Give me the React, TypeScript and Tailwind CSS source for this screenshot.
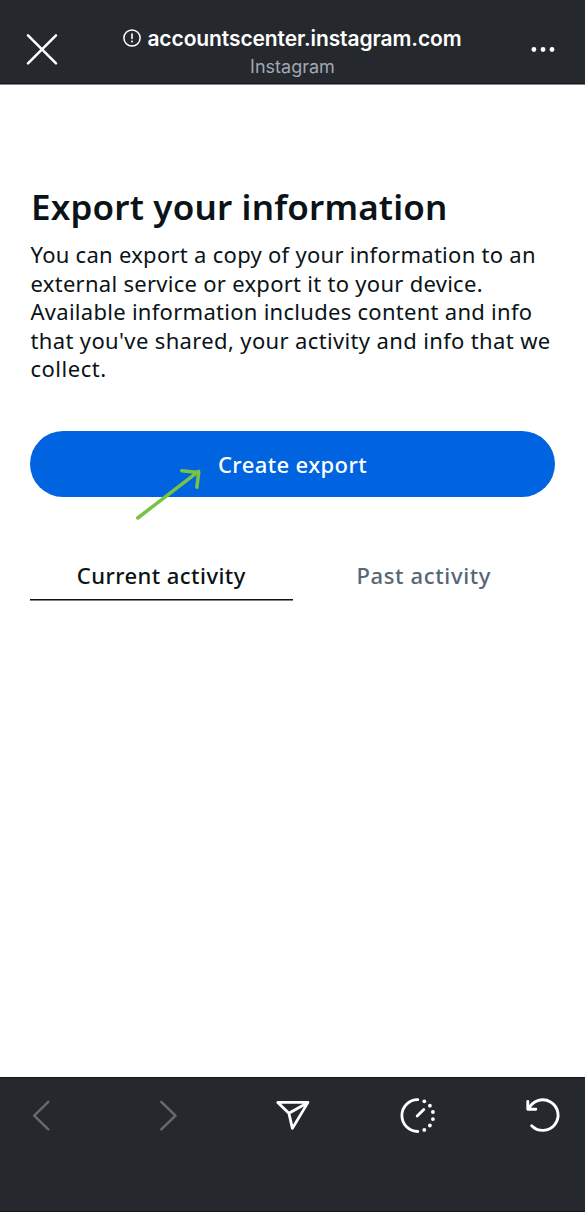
import React from "react";

const description = [
  { text: "You can export a copy of your information to an", tracking: "tracking-[0.28px]" },
  { text: "external service or export it to your device.", tracking: "tracking-[0.28px]" },
  { text: "Available information includes content and info", tracking: "tracking-[0.28px]" },
  { text: "that you've shared, your activity and info that we", tracking: "tracking-[0.36px]" },
  { text: "collect.", tracking: "tracking-[0.5px]" },
];

function Header() {
  return (
    <header className="flex h-[85px] shrink-0 items-start justify-between border-b border-[#86888b] bg-[#25282d] px-[26px] font-['Inter',sans-serif] text-white shadow-[inset_0_-1px_0_#15181d]">
      <button aria-label="Close" className="mt-[33px]">
        <svg width="32" height="32" viewBox="0 0 32 32" fill="none" stroke="currentColor" strokeWidth="2.5" strokeLinecap="round">
          <path d="M2 2.3 30 30.3M30 2.3 2 30.3" />
        </svg>
      </button>
      <div className="flex flex-col items-center pt-[24px]">
        <div className="flex h-[29px] items-center gap-[6px]">
          <svg className="mb-px" width="18" height="18" viewBox="0 0 18 18" fill="none" stroke="currentColor">
            <circle cx="9" cy="9" r="8.1" strokeWidth="1.5" />
            <path d="M9 5v4.5" strokeWidth="1.6" strokeLinecap="round" />
            <circle cx="9" cy="12.5" r="1" fill="currentColor" stroke="none" />
          </svg>
          <span className="pt-px text-[21px] leading-[28px] font-semibold tracking-[-0.1px] whitespace-nowrap">accountscenter.instagram.com</span>
        </div>
        <span className="text-[18px] leading-[28px] text-[#a0a9b5]">Instagram</span>
      </div>
      <button aria-label="More options" className="mt-[46px] flex w-[32px] justify-center">
        <svg width="24" height="7" viewBox="0 0 24 7" fill="currentColor">
          <circle cx="2.9" cy="3.5" r="2.4" />
          <circle cx="12" cy="3.5" r="2.4" />
          <circle cx="21" cy="3.5" r="2.4" />
        </svg>
      </button>
    </header>
  );
}

function Toolbar() {
  return (
    <nav className="flex h-[135px] shrink-0 items-start justify-between border-y border-[#15181d] bg-[#25282d] px-[22px] pt-[18px] text-white">
      <svg width="38" height="40" viewBox="0 0 38 40" fill="none" stroke="#66696d" strokeWidth="2.5" strokeLinecap="round" strokeLinejoin="round">
        <path d="M26.3 5.8 12.2 19.6l14.1 13.8" />
      </svg>
      <svg width="38" height="40" viewBox="0 0 38 40" fill="none" stroke="#66696d" strokeWidth="2.5" strokeLinecap="round" strokeLinejoin="round">
        <path d="m13.3 5.8 14.2 13.8-14.2 13.8" />
      </svg>
      <svg width="38" height="40" viewBox="0 0 38 40" fill="none" stroke="currentColor" strokeWidth="2.8" strokeLinecap="round" strokeLinejoin="round">
        <path d="M3.8 6.4h30.2L18.4 32.4l-3.5-15.1ZM14.9 17.3 33.6 6.7" />
      </svg>
      <svg width="38" height="40" viewBox="0 0 38 40" fill="none" stroke="currentColor" strokeWidth="2.8" strokeLinecap="round">
        <path d="M18.8 3.7a15.9 15.9 0 0 0 0 31.8M18.2 20l6.6-6.5" />
        <g fill="currentColor" stroke="none">
          <circle cx="25.3" cy="5.3" r="1.9" />
          <circle cx="30.9" cy="9.7" r="1.9" />
          <circle cx="33.9" cy="16" r="1.9" />
          <circle cx="33.9" cy="23.1" r="1.9" />
          <circle cx="30.9" cy="29.5" r="1.9" />
          <circle cx="25.3" cy="33.9" r="1.9" />
        </g>
      </svg>
      <svg width="38" height="40" viewBox="0 0 38 40" fill="none" stroke="currentColor" strokeWidth="2.9" strokeLinecap="round" strokeLinejoin="round">
        <path d="M3.6 13.3A15.3 15.3 0 1 1 6.7 29.7M2.8 5.4v7.9h8" />
      </svg>
    </nav>
  );
}

export default function App() {
  return (
    <div className="flex h-[1212px] w-[585px] flex-col overflow-hidden bg-white font-['Noto_Sans',sans-serif] text-[#0a1317]">
      <Header />
      <main className="flex-1 px-[30px] pt-[97px]">
        <h1 className="h-[50px] pl-px text-[35px] leading-[50px] font-semibold tracking-[0.17px] whitespace-nowrap">Export your information</h1>
        <p className="mt-[8px] pl-[0.5px] text-[22px] leading-[28.5px]">
          {description.map((line) => (
            <span key={line.text} className={`block whitespace-nowrap ${line.tracking}`}>
              {line.text}
            </span>
          ))}
        </p>
        <div className="relative mt-[48px]">
          <button className="flex h-[66px] w-full items-center justify-center rounded-full bg-[#0064e0] pt-[2px] text-[22px] font-medium tracking-[0.4px] text-white">
            <span className="whitespace-nowrap">Create export</span>
          </button>
          <svg className="absolute top-[34px] left-[104px]" width="70" height="56" viewBox="0 0 70 56" fill="none" stroke="#76c442" strokeWidth="3.5" strokeLinecap="round" strokeLinejoin="round">
            <path d="M3.7 53 64.5 6.4M47.7 5.7l17 1.8-1.8 14.7" />
          </svg>
        </div>
        <div className="mt-[55px] flex text-[22px] font-medium">
          <button className="h-[49px] flex-1 border-b border-[#7d858a] pb-px leading-[47px] tracking-[0.45px] whitespace-nowrap shadow-[inset_0_-1px_0_#0a1317]">Current activity</button>
          <button className="h-[49px] flex-1 pb-[2px] leading-[47px] tracking-[0.65px] whitespace-nowrap text-[#566676]">Past activity</button>
        </div>
      </main>
      <Toolbar />
    </div>
  );
}
